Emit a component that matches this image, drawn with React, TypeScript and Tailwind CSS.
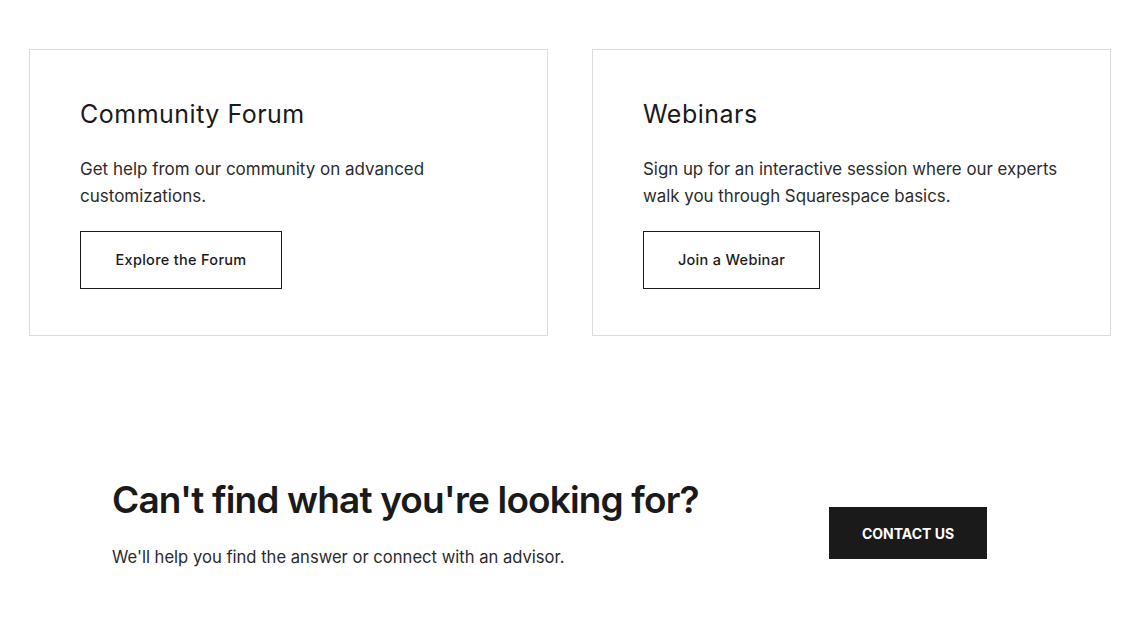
export default function App() {
  const font = { fontFamily: 'Inter, "Liberation Sans", sans-serif' };
  return (
    <div className="w-[1146px] h-[626px] bg-white text-[#1a1a1a]" style={font}>
      <div className="flex gap-[44px] pl-[29px] pt-[49px]">
        <div className="w-[519px] h-[287px] border border-[#dcdcdc] pl-[50px] pt-[50px]">
          <h2 className="text-[25px] leading-[28px] font-normal tracking-[0.5px]">Community Forum</h2>
          <p className="mt-[28px] text-[17px] leading-[27px] text-[#2b2b2b] w-[380px]">
            Get help from our community on advanced customizations.
          </p>
          <button className="mt-[21px] w-[202px] h-[58px] border border-[#1a1a1a] text-[14.5px] font-medium tracking-[0.3px]">
            Explore the Forum
          </button>
        </div>
        <div className="w-[519px] h-[287px] border border-[#dcdcdc] pl-[50px] pt-[50px]">
          <h2 className="text-[25px] leading-[28px] font-normal tracking-[0.5px]">Webinars</h2>
          <p className="mt-[28px] text-[16.85px] leading-[27px] text-[#2b2b2b] w-[420px]">
            Sign up for an interactive session where our experts walk you through Squarespace basics.
          </p>
          <button className="mt-[21px] w-[177px] h-[58px] border border-[#1a1a1a] text-[14.5px] font-medium tracking-[0.3px]">
            Join a Webinar
          </button>
        </div>
      </div>
      <div className="flex items-start pl-[112px] pt-[142px]">
        <div className="w-[717px]">
          <h1 className="text-[37px] leading-[44px] font-semibold tracking-[-0.85px]">Can't find what you're looking for?</h1>
          <p className="mt-[23px] text-[16.6px] leading-[24px] text-[#2b2b2b]">
            We'll help you find the answer or connect with an advisor.
          </p>
        </div>
        <button className="mt-[29px] w-[158px] h-[52px] bg-[#1a1a1a] text-white text-[14px] font-bold">
          CONTACT US
        </button>
      </div>
    </div>
  );
}
